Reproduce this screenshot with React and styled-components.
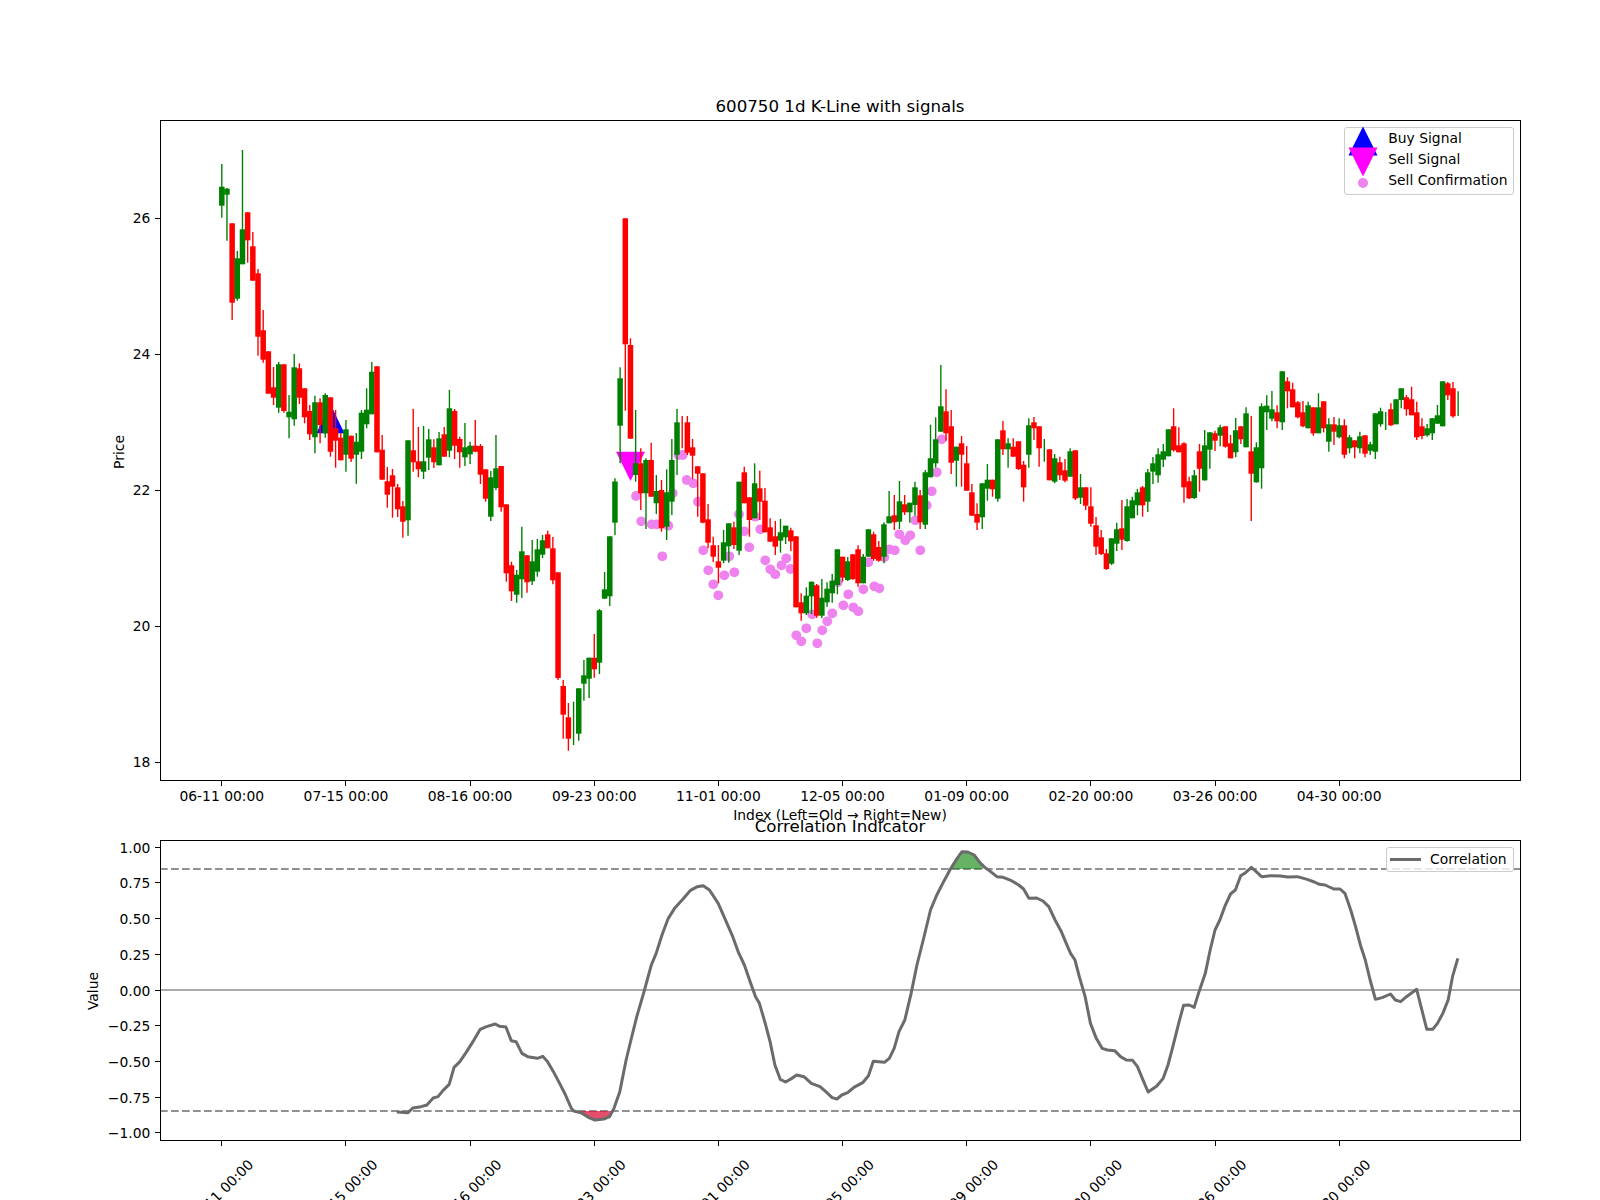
import React from 'react'
import styled, { createGlobalStyle } from 'styled-components'

const GlobalStyle = createGlobalStyle`
  html, body { margin: 0; padding: 0; background: #fff; }
`

// [colour, wick top, body top, body bottom, wick bottom], figure pixels, 0 = no body / same as body
const CANDLES = [
  ['g',164,186.7,205.7,217.7],['g',188,188.7,194.7,240.7],['r',0,223.3,302.7,320],['g',251,258.3,298.7,300.7],
  ['g',150,229.3,264.3,264.3],['r',0,212.3,240.3,262.7],['r',232,246.3,280.7,0],['r',269,273.3,336.7,355.7],
  ['r',310,330.3,359.7,362.7],['r',0,351.3,393.7,0],['r',367,387.3,397.7,405],['g',362,364.3,407.7,412.7],
  ['r',0,364.3,411,412.7],['g',395,411.7,417.3,438.3],['g',354,367.3,419.3,425.7],['r',363.3,368.3,397.7,404],
  ['r',0,388.3,417.3,423.3],['r',405,411,434.3,440],['g',395.7,402.3,437.3,453.3],['r',398.3,402.3,425,443.3],
  ['g',393.3,395,433.3,437.7],['r',0,397.3,451.7,456.7],['r',410,428.3,440.7,467.7],['r',433,437.7,460.3,0],
  ['g',420,429.3,454.7,471.7],['r',0,435.7,458.7,462],['g',433,441.7,454.7,483.7],['g',410,412.7,451.7,459],
  ['g',388.3,409.7,424.3,428.3],['g',362,371.7,414.3,0],['r',0,366.3,452.3,0],['r',435,449.7,479.7,0],
  ['r',467,481.3,494.7,507.7],['r',469,475.3,486.7,517.7],['r',484,487.3,509.3,517],['r',501,506.3,521.7,537.7],
  ['g',0,440.3,520.3,535.7],['r',409,450.3,462.3,471.7],['r',427,461.3,469.3,477.3],['g',426,461.3,471.7,479],
  ['g',429,439.3,457.7,470],['r',439.3,447.3,462.3,468],['g',432,438.3,465.3,0],['r',427,434.3,456.7,0],
  ['g',390,408.3,450.7,457.3],['r',409,411,445.7,459],['r',436.7,439,452.3,467.7],['g',423,447.3,457.3,466],
  ['g',441.7,445.7,454.3,464],['r',420,445.7,451.7,452.3],['r',444,446,474.7,484],['r',0,469.3,498.7,501.7],
  ['g',471,477.3,516.7,521],['g',435,468.3,488,490],['r',0,466,507.3,511.7],['r',0,504.3,573.3,581.7],
  ['r',561.7,565.3,591.3,601],['g',570,574.7,594.7,602.7],['g',526.7,551.3,579.3,598],['r',0,555.3,582.3,592.7],
  ['g',540,561.3,581.3,585],['g',539,549.3,571.7,576.7],['g',535,540.3,554.7,558],['r',530.7,534.3,548.3,0],
  ['r',537,548.3,580.3,584.3],['r',0,572.3,678,680],['r',680,686,714.7,738.7],['r',703,717.3,738.7,750.7],
  ['g',701.7,0,0,745],['g',0,688.3,733.7,740.7],['g',660,675.3,683.7,700.7],['g',0,657.7,678.7,698],
  ['r',634,657.7,669.3,677.7],['g',609,610.3,662.7,674],['g',572,589.3,598.7,0],['g',0,536.3,596.3,606],
  ['g',478.3,481.5,522.7,535],['g',367.3,378.3,425.7,463.3],['r',0,218.3,344.3,410.7],['r',338.3,345,438.7,0],
  ['g',410,463.3,475,481.7],['r',448.3,463.3,493.3,510],['g',458.3,460,493.3,529],['r',442.7,460,496.7,0],
  ['g',475,491,503.3,514],['r',480,490,528.3,531.7],['g',469.3,492.3,526.7,540],['g',439,460,501.7,515],
  ['g',409,422.3,454.7,475],['r',416,0,0,448.3],['r',416,422.3,452.7,455],['r',439,447.3,455.7,479.3],
  ['r',0,466.3,473.7,516.7],['r',0,473.3,522.7,523.3],['r',504,519.3,542.7,548.3],['r',536.7,545.3,556.7,562],
  ['r',545,561.3,567.7,583.3],['g',530,542.3,560.7,563.3],['g',0,523.3,546.3,562.7],['r',521.7,527.3,545,549],
  ['g',0,481.7,550.7,555],['r',466.7,472.3,503.3,0],['r',0,497.3,520,536.7],['g',463.3,483.3,518.3,0],
  ['r',470.7,488.3,501.7,520],['r',488,500.7,532.3,0],['r',518.3,527.3,541.7,0],['r',521,536.3,546.7,555],
  ['g',519,532.3,540.7,552.7],['g',0,525.7,537.3,544],['r',527.7,530.3,541.3,551],['r',0,536.3,607.3,0],
  ['r',593.3,602.3,613.3,620.7],['g',587.3,595.7,613.3,615],['g',0,581.7,596.3,614],['r',584,585.3,615.7,617.7],
  ['g',579,597.7,615.7,618.3],['g',582.3,588.7,602.3,606.7],['g',574,580.7,593.3,602.7],['g',0,549.3,585,594.3],
  ['r',0,556.7,577.7,581.7],['g',557,561.3,580,581],['r',0,554.3,579,580],['r',545.3,549.3,583.3,586.7],
  ['g',554,556.7,583.3,0],['g',0,529.3,556.7,0],['r',531.7,534.3,559,560.7],['r',541,547,560.7,561.7],
  ['g',522.3,524.3,556.7,563.3],['g',491,516.3,523.3,0],['r',495,515.3,522.3,530],['g',481,501.3,521.7,529],
  ['r',495,504.3,512.3,515],['g',0,502.7,512.3,522.7],['g',481.7,487.3,505,515.7],['r',490,495.3,522.3,529],
  ['g',470,472.3,524.7,529],['g',424.7,458.3,477.3,0],['g',417.3,439.3,463.3,467.7],['g',365,406.3,431.7,0],
  ['r',389.3,411.3,433.3,440.7],['r',410,426.3,462.7,474],['g',0,446.7,460.7,486.7],['r',436,443.3,454.7,486.7],
  ['r',446,463.3,490.7,0],['r',484,492.3,515.7,0],['r',503.3,514,522.7,530],['g',0,483.3,517.3,529],
  ['g',464,479.7,488.7,500.7],['r',0,479.7,489.3,496.7],['g',0,439.3,498.7,501.7],['r',421,430.3,449.3,455],
  ['g',438.3,443.3,449.3,467.7],['r',438.3,446.7,456.7,0],['r',0,441.3,469,470],['r',461,464.7,487.3,501.7],
  ['g',418.3,425.3,454.7,467.7],['r',417,422.3,428.3,440],['r',0,426.3,448.3,466.7],['g',439,0,0,461.7],
  ['r',0,449.3,480.3,0],['g',454,458.3,481.7,483.3],['r',456.7,462.3,475.3,480],['r',459,470.3,480.7,482.3],
  ['g',448.3,451.3,476.7,0],['r',0,450.3,498.5,500],['g',474,487.3,497.7,504],['r',0,487.3,505.7,510],
  ['r',487.3,506.3,523.7,526.7],['r',517,525.3,546.7,555],['r',530,537.3,554,555],['r',549,553.3,569,570],
  ['g',0,538.3,563.7,565],['g',522.7,529.3,543.7,551],['r',500,528.3,539.7,550],['g',499,506.3,541,541.7],
  ['g',496.7,500.3,518.3,0],['g',489,492.3,505.3,515.3],['r',486,487.3,505.3,516.7],['g',469,472.3,501.7,512],
  ['g',457,463.3,471.7,484],['g',448.3,454.3,475.3,482.7],['g',444,451.3,459.7,467],['g',0,429.3,456.3,0],
  ['r',408.3,426.3,450.3,451.7],['r',427.3,445.3,452.3,0],['r',442.3,443.3,487.3,502.7],['r',476.7,481.3,498.3,499],
  ['g',470,475.3,498,499],['r',444,451.3,468.7,491.7],['g',430,445.3,480.3,480.7],['g',0,432.3,449.7,468.7],
  ['r',430.7,433.3,440.7,451],['g',424.7,427.3,435.7,446.3],['r',0,426.3,446.7,447.7],['r',435,443.3,458.3,0],
  ['g',418,430.3,452.3,457.3],['r',0,426.3,439.3,444],['g',407.3,413.3,447.3,0],['r',416,451.3,473.7,521],
  ['g',442.3,447.3,482.3,482.7],['g',403.3,406.3,468.3,488.7],['g',395.3,405.7,412.3,430],['g',391,409.3,418.7,421.3],
  ['r',405.3,412.3,421.3,428.3],['g',0,371.3,422.3,430],['r',377.3,381.3,391.3,408.3],['r',382.7,389.3,407.3,0],
  ['r',401,402.3,417.3,418.3],['r',401,412.3,426.3,427.3],['g',401.7,405.3,428.3,0],['r',0,407.3,433.3,435.7],
  ['g',393.3,407.3,433.3,0],['r',0,401.3,428.3,432.3],['g',418.3,424.3,441.7,451.7],['r',417,424.3,431.7,445],
  ['g',418.3,425.3,437.3,438.3],['r',419.3,425.3,454.7,458.3],['g',435,437.3,448.3,453.3],['r',0,440.3,447.3,458.3],
  ['g',431.7,436.3,448.3,453.3],['r',0,435.3,453.7,457.3],['g',441.7,444.3,450.7,455],['g',0,413.3,451.7,459],
  ['g',407.7,411.3,424.3,426.7],['g',412,0,0,430],['r',403.3,409.3,425.3,426],['g',0,399.3,424.3,0],
  ['g',0,388.3,400,408.3],['r',395,397.3,409.3,415.7],['r',386.7,399.3,415.3,0],['r',401.7,412.3,437.3,440],
  ['r',418.3,426.3,436,439.3],['g',424,428.3,435.3,436.7],['g',0,418.3,433.3,440],['g',405,415.3,423.7,0],
  ['g',0,381.3,426.3,0],['r',382,383.3,395.3,400],['r',382,388.3,416.3,417.7],['g',391.3,0,0,416],
]

const DOTS = [
  [636,496],[641.3,521.3],[651.7,524.3],[656.7,524.3],[662.3,556.3],[668.3,525.7],[672.7,493.3],[678.5,455],[682.7,455],
  [686.7,480],[693.3,483.3],[698,501.7],[703.3,550.3],[708.3,570.3],[713.3,584.3],[718.3,595.3],[724.3,575.3],[734.3,572.3],
  [729.3,556.3],[739,514.3],[744.3,531.3],[749.3,547.3],[755.3,516.7],[760.3,529.3],[765.3,560.3],[770.3,569.3],[775.3,574.3],
  [781.5,565.3],[786.3,558.3],[790.5,569],[796.3,635.3],[801.3,641.3],[806.3,628.3],[812.3,614.3],[817.3,643.3],[822.3,630.3],
  [827.3,621.3],[832.3,613.3],[837.7,582.3],[843.3,605.3],[848.3,594.3],[853.3,607.3],[858.3,611.3],[863.3,589.3],[868.3,562.3],
  [874.3,586.3],[879.3,588.3],[884.3,557.3],[889.3,549.3],[894.7,550.3],[899.3,534.3],[905.3,540.3],[910.3,535.3],[915.3,520.3],
  [920.3,550.3],[926.7,505.3],[931.7,491.3],[936.7,472.3],[941.7,439.3],
]

// traced from the indicator, left half then right half
const LINE_LEFT = [
  [695,1026],[718,1028],[728,1014],[745,1010],[757,1005],[770,984],[780,980],[790,962],[803,943],[813,892],[825,875],[838,847],
  [852,815],[867,778],[880,770],[898,762],[907,769],[920,771],[931,812],[941,815],[953,850],[965,860],[985,865],[996,859],
  [1006,875],[1018,905],[1030,938],[1042,972],[1055,1015],[1060,1023],[1075,1028],[1090,1042],[1104,1050],[1122,1047],[1134,1040],
  [1143,1015],[1155,965],[1168,870],[1178,810],[1190,740],[1205,665],[1220,585],[1230,550],[1242,495],[1255,445],[1268,415],
  [1285,388],[1300,362],[1315,350],[1327,347],[1340,360],[1358,400],[1370,440],[1388,500],[1400,548],[1412,585],[1425,640],
  [1435,680],[1443,700],[1455,760],[1465,815],[1475,885],[1486,928],[1497,936],[1510,925],[1520,915],[1535,920],[1550,940],
]
const LINE_RIGHT = [
  [0,950],[12,965],[25,983],[35,987],[45,975],[57,968],[70,952],[88,938],[100,917],[110,874],[133,877],[143,865],[153,835],[163,785],
  [175,750],[188,670],[200,585],[213,510],[228,420],[240,378],[255,335],[270,295],[283,265],[293,245],[305,246],[318,255],[330,278],
  [340,292],[352,305],[365,320],[378,322],[395,332],[410,345],[420,357],[431,385],[447,384],[460,393],[472,410],[485,450],[497,482],
  [510,527],[517,550],[526,570],[535,620],[547,680],[558,760],[570,805],[582,835],[593,840],[608,842],[620,860],[632,870],[645,871],
  [655,890],[665,925],[677,966],[695,948],[708,925],[718,885],[728,830],[740,760],[750,706],[762,705],[772,712],[782,665],[795,610],
  [805,540],[815,480],[825,450],[835,410],[847,372],[857,360],[868,317],[878,308],[890,292],[900,305],[911,320],[930,317],[950,318],
  [965,321],[985,320],[1005,328],[1020,336],[1030,343],[1042,345],[1060,357],[1073,357],[1083,370],[1095,420],[1105,470],[1115,525],
  [1125,570],[1135,630],[1146,688],[1160,683],[1177,672],[1187,690],[1198,695],[1210,680],[1231,658],[1240,710],[1252,778],[1264,778],
  [1274,760],[1285,730],[1296,690],[1305,620],[1316,565],
]
const RED_FILL = [[1062,1023],[1075,1028],[1090,1042],[1104,1050],[1122,1047],[1134,1040],[1140,1023]]
const GREEN_FILL = [[272,297],[283,265],[293,245],[305,246],[318,255],[330,278],[337,297]]

const leftPt = ([x, y]) => `${60 + x / 2.0632},${770 + y / 3}`
const rightPt = ([x, y]) => `${820 + x / 2.0632},${770 + y / 3}`

const LINE_POINTS = [...LINE_LEFT.map(leftPt), ...LINE_RIGHT.map(rightPt)].join(' ')

const TICK_LABELS = ['06-11 00:00', '07-15 00:00', '08-16 00:00', '09-23 00:00', '11-01 00:00', '12-05 00:00', '01-09 00:00', '02-20 00:00', '03-26 00:00', '04-30 00:00']
const PRICE_TICKS = [[26, 218.3], [24, 354.3], [22, 490.3], [20, 626.3], [18, 762.3]]
const VALUE_TICKS = ['1.00', '0.75', '0.50', '0.25', '0.00', '−0.25', '−0.50', '−0.75', '−1.00']

const candleX = i => 221.8 + 5.173 * i
const tickX = n => candleX(n * 24)
const valueY = v => 990 - v * 142.86
const snap = v => Math.floor(v) + 0.5

const Figure = styled.main`
  width: 1600px;
  height: 1200px;
  overflow: hidden;
  padding-top: 97px;
  box-sizing: border-box;
  background: #fff;
  color: #000;
  font-family: "DejaVu Sans", sans-serif;
`

const PlotWrap = styled.div`
  position: relative;
  width: 1600px;
  height: ${p => p.$height}px;
`

const ChartSvg = styled.svg`
  display: block;
  width: 1600px;
  height: 100%;
`

const Title = styled.div`
  margin-left: 160px;
  width: 1360px;
  height: ${p => p.$height}px;
  margin-bottom: ${p => p.$gap}px;
  line-height: ${p => p.$height}px;
  font-size: 16.67px;
  text-align: center;
`

const AxisLabel = styled.div`
  margin-left: 160px;
  width: 1360px;
  height: 12px;
  line-height: 14px;
  font-size: 13.89px;
  text-align: center;
`

const Legend = styled.div`
  position: absolute;
  top: ${p => p.$top}px;
  right: 86.5px;
  box-sizing: border-box;
  height: ${p => p.$height}px;
  padding: ${p => p.$pad};
  border: 1px solid #ccc;
  border-radius: 3px;
  background: rgba(255, 255, 255, 0.8);
`

const LegendRow = styled.div`
  display: flex;
  align-items: flex-start;
  gap: ${p => p.$gap}px;
  height: 21px;
  line-height: 21px;
  font-size: 13.89px;
  white-space: nowrap;
`

const MarkerSwatch = styled.svg`
  flex: none;
  width: 30px;
  height: 30px;
  margin-top: -2.5px;
  overflow: visible;
`

const LineSwatch = styled.span`
  flex: none;
  width: 31px;
  height: 3px;
  margin-top: 9px;
  background: #6b6b6b;
`

const TickText = styled.text`
  font-size: 13.89px;
  fill: #000;
  text-anchor: ${p => p.$anchor || 'middle'};
`

const Spine = styled.rect`
  fill: none;
  stroke: #000;
  stroke-width: 1px;
  shape-rendering: crispEdges;
`

const Tick = styled.line`
  stroke: #000;
  stroke-width: 1px;
  shape-rendering: crispEdges;
`

const Wick = styled.line`
  stroke: ${p => p.$color};
  stroke-width: 1.39px;
`

const Body = styled.rect`
  fill: ${p => p.$color};
`

const Dot = styled.circle`
  fill: #ee82ee;
`

const RefLine = styled.line`
  stroke: ${p => p.$color};
  stroke-width: ${p => p.$width}px;
  stroke-dasharray: ${p => p.$dash || 'none'};
`

const CorrLine = styled.polyline`
  fill: none;
  stroke: #6b6b6b;
  stroke-width: 3px;
  stroke-linejoin: round;
`

function Candle({ i, data }) {
  const [c, wickTop, top, bottom, wickBottom] = data
  const color = c === 'g' ? '#008000' : '#ff0000'
  const x = candleX(i)
  return (
    <g>
      <Wick $color={color} x1={x} x2={x} y1={wickTop || top} y2={wickBottom || bottom} />
      {top > 0 && <Body $color={color} x={x - 2.75} width={5.5} y={top} height={bottom - top} />}
    </g>
  )
}

function PriceChart() {
  return (
    <ChartSvg viewBox="0 120 1600 688">
      <polygon points="316.4,433.3 330.4,404 344.4,433.3" fill="#0000ff" />
      <polygon points="616,451.7 645,451.7 630.5,481" fill="#ff00ff" />
      {DOTS.map(([x, y], i) => <Dot key={i} cx={x} cy={y} r={4.9} />)}
      {CANDLES.map((d, i) => <Candle key={i} i={i} data={d} />)}
      <Spine x={160.5} y={120.5} width={1360} height={660} />
      {PRICE_TICKS.map(([v, y]) => (
        <g key={v}>
          <Tick x1={155} x2={160} y1={snap(y)} y2={snap(y)} />
          <TickText $anchor="end" x={150.3} y={y + 5}>{v}</TickText>
        </g>
      ))}
      {TICK_LABELS.map((t, n) => (
        <g key={t}>
          <Tick x1={snap(tickX(n))} x2={snap(tickX(n))} y1={781} y2={785.5} />
          <TickText x={tickX(n)} y={801}>{t}</TickText>
        </g>
      ))}
      <TickText transform="translate(123.5 452) rotate(-90)">Price</TickText>
    </ChartSvg>
  )
}

function IndicatorChart() {
  return (
    <ChartSvg viewBox="0 840 1600 360">
      <RefLine $color="#aaaaaa" $width={2} x1={160} x2={1520} y1={990} y2={990} />
      <RefLine $color="#909090" $width={2} $dash="7.7 3.3" x1={160} x2={1520} y1={869} y2={869} />
      <RefLine $color="#909090" $width={2} $dash="7.7 3.3" x1={160} x2={1520} y1={1111} y2={1111} />
      <polygon points={RED_FILL.map(leftPt).join(' ')} fill="rgba(220, 20, 60, 0.75)" />
      <polygon points={GREEN_FILL.map(rightPt).join(' ')} fill="rgba(0, 128, 0, 0.6)" />
      <CorrLine points={LINE_POINTS} />
      <Spine x={160.5} y={840.5} width={1360} height={300} />
      {VALUE_TICKS.map((t, n) => {
        const y = valueY(1 - n * 0.25)
        return (
          <g key={t}>
            <Tick x1={155} x2={160} y1={snap(y)} y2={snap(y)} />
            <TickText $anchor="end" x={150.3} y={y + 5.6}>{t}</TickText>
          </g>
        )
      })}
      {TICK_LABELS.map((t, n) => (
        <g key={t}>
          <Tick x1={snap(tickX(n))} x2={snap(tickX(n))} y1={1141} y2={1145.5} />
          <TickText transform={`translate(${tickX(n) + 2.5} 1195.5) rotate(-45)`}>{t}</TickText>
        </g>
      ))}
      <TickText transform="translate(97.8 991) rotate(-90)">Value</TickText>
    </ChartSvg>
  )
}

export default function App() {
  return (
    <Figure>
      <GlobalStyle />
      <Title $height={20} $gap={3}>600750 1d K-Line with signals</Title>
      <PlotWrap $height={688}>
        <PriceChart />
        <Legend $top={7} $height={68} $pad="0 5px 0 3.6px">
          <LegendRow $gap={10}>
            <MarkerSwatch viewBox="0 0 30 30"><polygon points="0.5,29.5 15,0.5 29.5,29.5" fill="#0000ff" /></MarkerSwatch>
            Buy Signal
          </LegendRow>
          <LegendRow $gap={10}>
            <MarkerSwatch viewBox="0 0 30 30"><polygon points="0.5,0.5 29.5,0.5 15,29.5" fill="#ff00ff" /></MarkerSwatch>
            Sell Signal
          </LegendRow>
          <LegendRow $gap={10}>
            <MarkerSwatch viewBox="0 0 30 30"><circle cx="15" cy="15" r="5" fill="#ee82ee" /></MarkerSwatch>
            Sell Confirmation
          </LegendRow>
        </Legend>
      </PlotWrap>
      <AxisLabel>Index (Left=Old → Right=New)</AxisLabel>
      <Title $height={14} $gap={6}>Correlation Indicator</Title>
      <PlotWrap $height={360}>
        <IndicatorChart />
        <Legend $top={7.3} $height={25} $pad="1px 6px 0 3px">
          <LegendRow $gap={9}>
            <LineSwatch />
            Correlation
          </LegendRow>
        </Legend>
      </PlotWrap>
    </Figure>
  )
}
